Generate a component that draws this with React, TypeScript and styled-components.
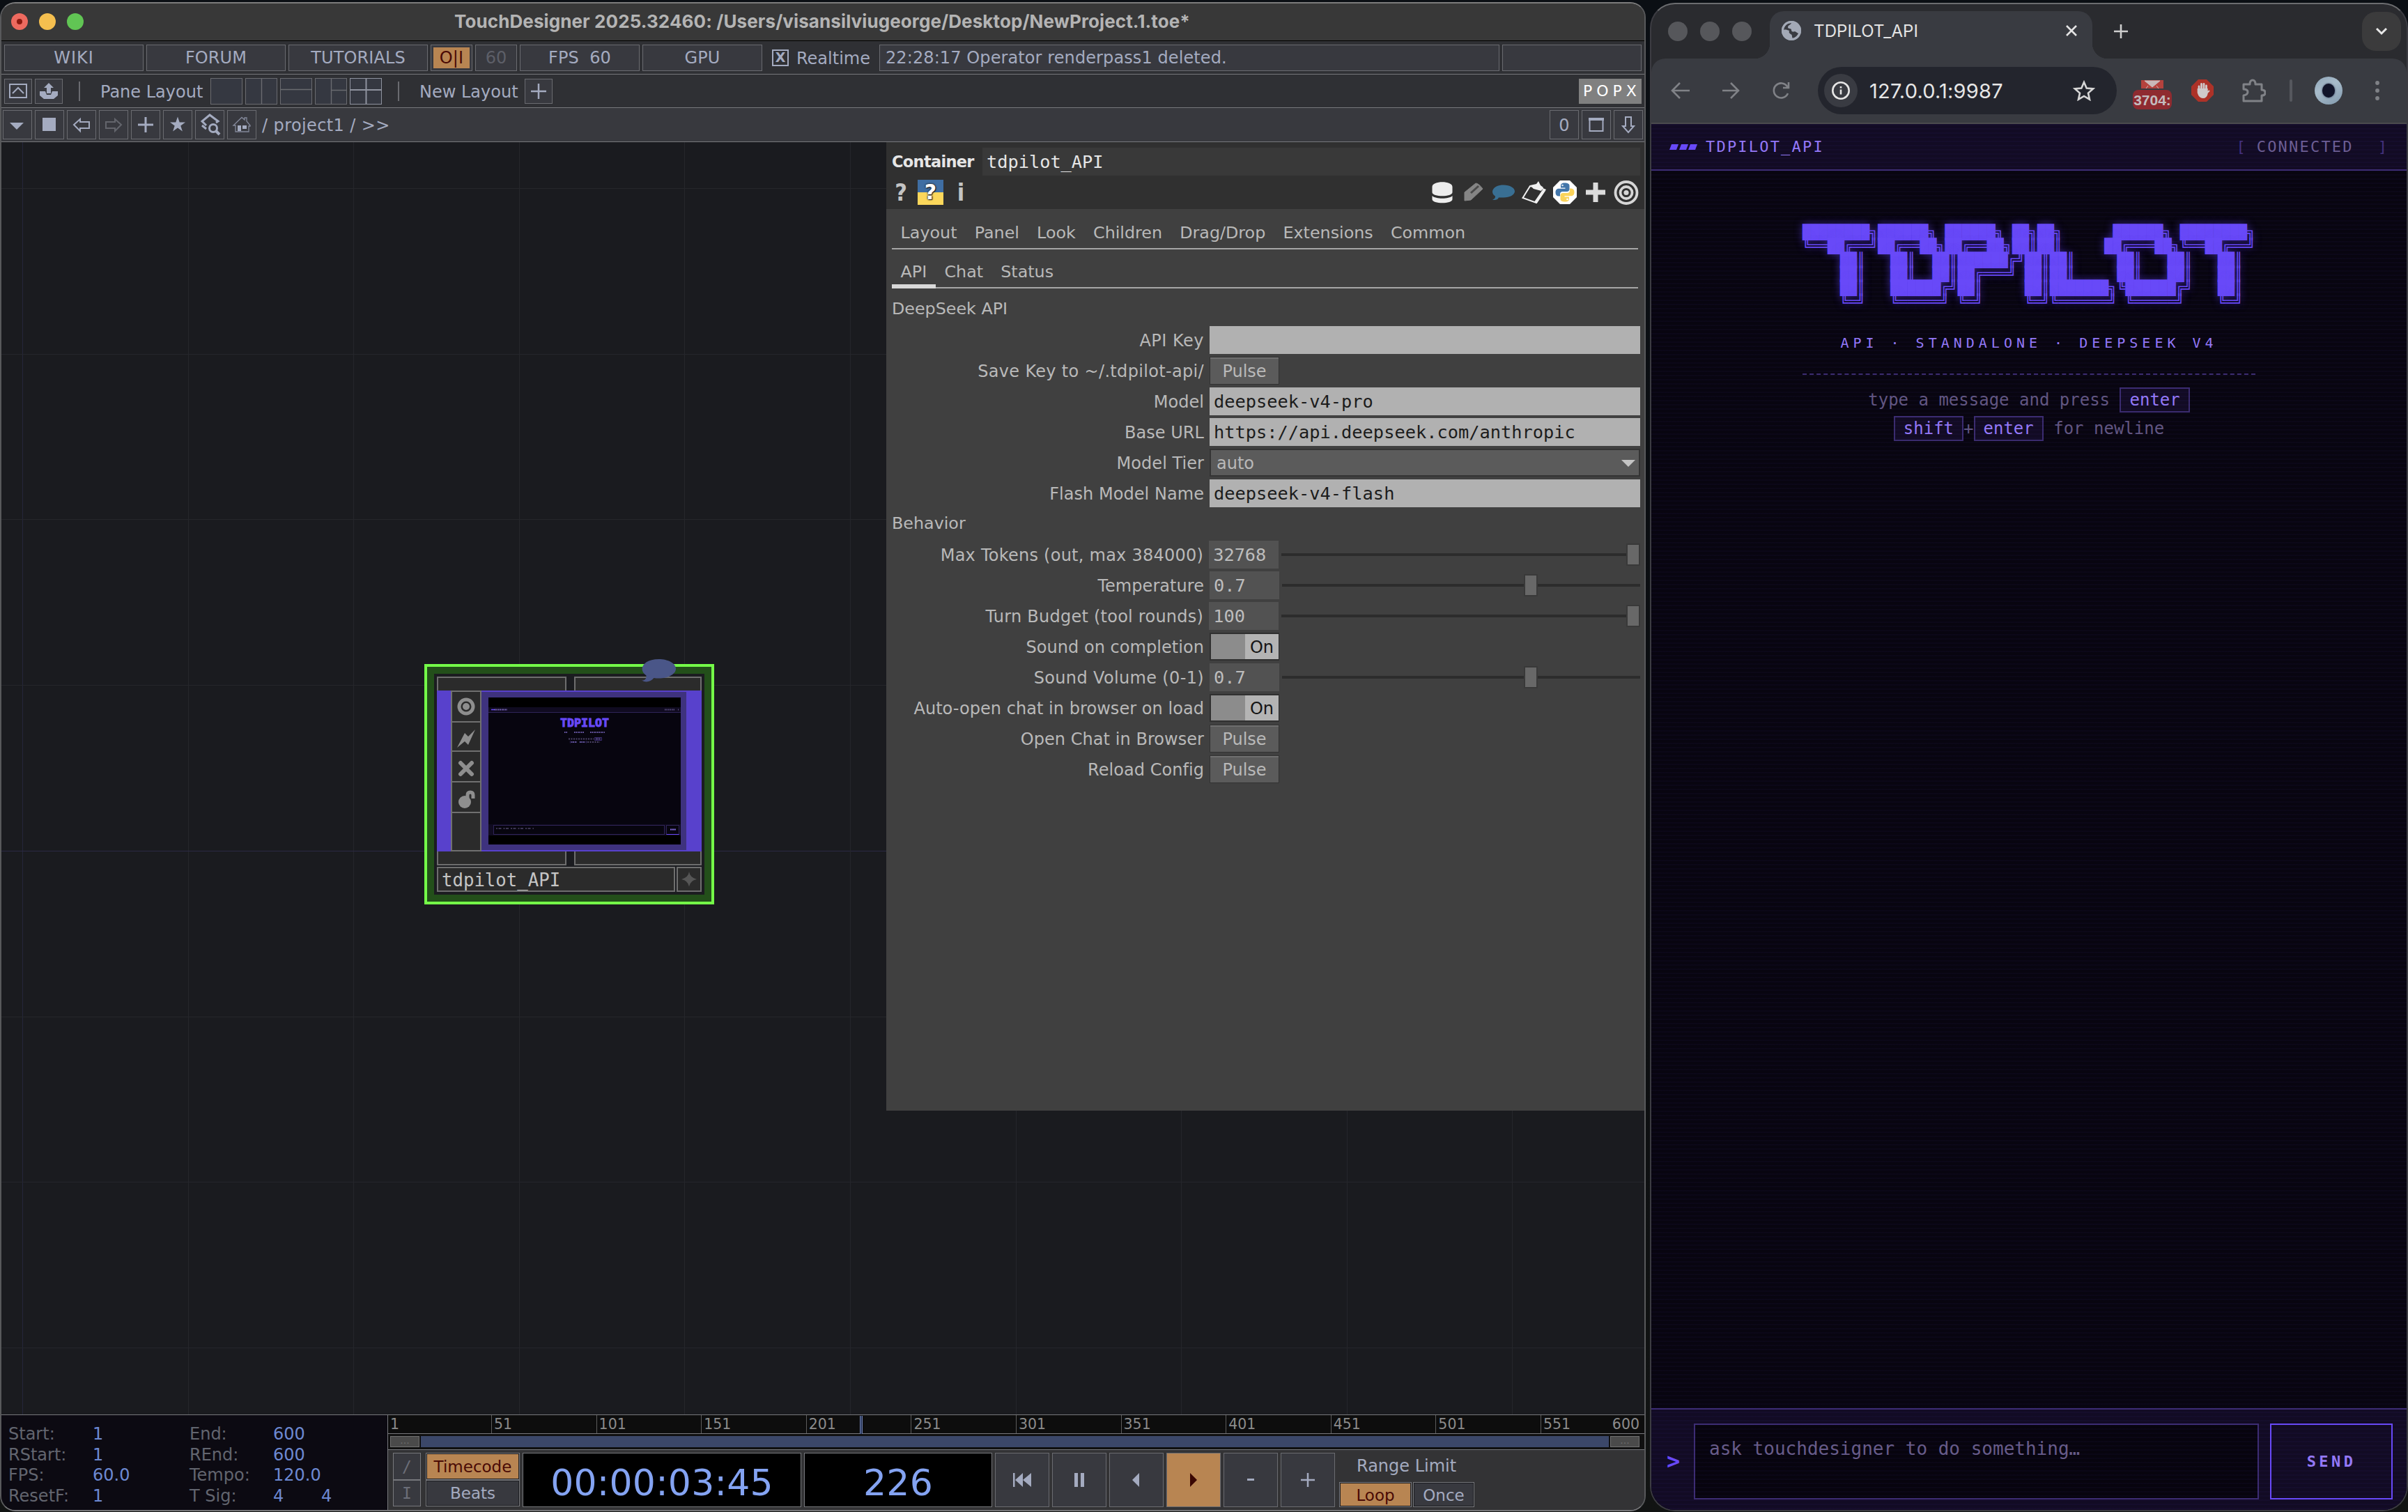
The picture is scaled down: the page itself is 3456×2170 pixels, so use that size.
import React from 'react';
import styled, { createGlobalStyle, css } from 'styled-components';

const sans = '"DejaVu Sans", Verdana, sans-serif';
const mono = '"DejaVu Sans Mono", Menlo, monospace';
const system = 'Inter, Roboto, sans-serif';

const Global = createGlobalStyle`
  *, *::before, *::after { box-sizing: border-box; }
  body { margin: 0; background: #0b0e12; }
`;

const Desktop = styled.div`
  width: 3456px;
  height: 2170px;
  overflow: hidden;
  display: flex;
  gap: 6px;
  background: linear-gradient(#0b0f14, #0b0d10 60%, #121413);
`;

/* ---------- TouchDesigner window ---------- */

const DesignerWindow = styled.section`
  width: 2362px;
  height: 2166px;
  margin-top: 3px;
  display: flex;
  flex-direction: column;
  overflow: hidden;
  border: 2px solid #58595b;
  border-top-color: #7c7c7c;
  border-bottom-color: #77777a;
  border-radius: 22px;
  background: #2f3034;
  color: #a4abc0;
  font: 24px/1 ${sans};
`;

const TitleBar = styled.header`
  height: 54px;
  flex: none;
  display: flex;
  align-items: center;
  padding: 0 0 2px 14px;
  border-bottom: 1px solid #000;
  background: #383838;
`;

const Lights = styled.div<{ $gap: number }>`
  display: flex;
  gap: ${p => p.$gap}px;
`;

const Light = styled.i<{ $color: string; $size: number }>`
  width: ${p => p.$size}px;
  height: ${p => p.$size}px;
  border-radius: 50%;
  background: ${p => p.$color};
  display: grid;
  place-items: center;
`;

const UnsavedDot = styled.i`
  width: 8px;
  height: 8px;
  border-radius: 50%;
  background: #8c1a10;
`;

const WindowTitle = styled.h1`
  margin: 0 0 0 532px;
  color: #b4b4b4;
  font: 700 26px/1 ${system};
  letter-spacing: 0.1px;
  white-space: nowrap;
`;

const Bar = styled.div<{ $height: number; $bg?: string; $pad: string }>`
  height: ${p => p.$height}px;
  flex: none;
  display: flex;
  align-items: center;
  gap: 4px;
  padding: ${p => p.$pad};
  border-bottom: 1px solid #77787c;
  background: ${p => p.$bg ?? '#2f3034'};
  white-space: nowrap;
`;

const Cell = styled.div<{ $w: number; $h?: number; $left?: boolean; $dim?: boolean; $space?: number }>`
  width: ${p => p.$w}px;
  height: ${p => p.$h ?? 38}px;
  flex: none;
  display: flex;
  align-items: center;
  justify-content: ${p => (p.$left ? 'flex-start' : 'center')};
  padding: ${p => (p.$left ? '1px 8px 0' : '1px 0 0')};
  border: 1px solid #6a6b70;
  background: #38393f;
  color: ${p => (p.$dim ? '#5d5f68' : '#a4abc0')};
  letter-spacing: ${p => p.$space ?? 0.1}px;
  white-space: pre;
  > svg { flex: none; margin: -2px -1px -1px; }
`;

const ActiveFill = styled.span`
  width: 52px;
  height: 30px;
  margin-top: -1px;
  padding-top: 1px;
  display: grid;
  place-items: center;
  background: #b88552;
  color: #4a0a05;
`;

const CheckBox = styled.span`
  width: 24px;
  height: 24px;
  margin-left: 10px;
  display: grid;
  place-items: center;
  border: 2px solid #a4abc0;
  font-weight: 700;
  font-size: 19px;
`;

const BarText = styled.span<{ $w: number; $ml: number; $space?: number }>`
  width: ${p => p.$w}px;
  margin-left: ${p => p.$ml}px;
  padding-top: 2px;
  letter-spacing: ${p => p.$space ?? 0}px;
`;

const Rule = styled.i<{ $ml: number }>`
  width: 2px;
  height: 28px;
  margin-left: ${p => p.$ml}px;
  background: #6a6b70;
`;

const PopxBadge = styled.span`
  width: 90px;
  height: 36px;
  margin-left: auto;
  padding-left: 6px;
  display: grid;
  place-items: center start;
  background: #808080;
  color: #fff;
  font-size: 22px;
  letter-spacing: 6px;
`;

const PathText = styled.span`
  margin-left: 4px;
  padding-top: 1px;
  letter-spacing: 0.4px;
  white-space: pre;
`;

const Push = styled.span`
  margin-left: auto;
`;

const Network = styled.div`
  flex: 1;
  position: relative;
  display: flex;
  align-items: flex-start;
  justify-content: flex-end;
  background: #1a1b1f;
`;

const Grid = styled.svg`
  position: absolute;
  inset: 0;
`;

/* ---------- Operator node on the network canvas ---------- */

const Node = styled.div`
  position: absolute;
  left: 607px;
  top: 749px;
  width: 416px;
  height: 345px;
  border: 4px solid #74fc48;
  background: #1b1c20;
  box-shadow: inset 0 0 0 10px #234f1a;
  padding: 14px;
  display: flex;
  flex-direction: column;
`;

const Flags = styled.div<{ $top?: boolean }>`
  height: 20px;
  display: flex;
  gap: 11px;
  > i {
    flex: 1 1 186px;
    border: 2px solid #6e6e6e;
    border-${p => (p.$top ? 'bottom' : 'top')}: 0;
    background: #2b2b2b;
  }
  > i + i { flex-basis: 183px; }
`;

const NodeMiddle = styled.div`
  height: 231px;
  display: flex;
  padding: 0 22px 0 20px;
  background: #5841cc;
`;

const NodeTools = styled.div`
  width: 44px;
  display: grid;
  grid-template-rows: 42px 40px 42px 42px 1fr;
  gap: 2px;
  padding: 2px;
  background: #707070;
  > i {
    display: grid;
    place-items: center;
    background: #2b2b2b;
  }
  > i + i { padding-top: 5px; }
`;

const NodeViewer = styled.div`
  flex: 1;
  margin: 2px 0;
  padding: 8px 8px 8px 10px;
  background: #3e327e;
`;

const MiniScreen = styled.div`
  width: 276px;
  height: 211px;
  display: flex;
  flex-direction: column;
  padding: 14px 0 13px;
  background: #000;
`;

const MiniHeader = styled.div`
  height: 8px;
  flex: none;
  border-bottom: 1px solid #2e2458;
  background: #100b20;
`;

const MiniBody = styled.div`
  flex: 1;
  display: flex;
  flex-direction: column;
  align-items: center;
  padding-top: 7px;
  background: #07050f;
`;

const MiniLogo = styled.b`
  color: #6849f8;
  font: 700 16.6px/16px ${mono};
  -webkit-text-stroke: 1px #6849f8;
`;

const MiniFooter = styled.div`
  height: 16px;
  flex: none;
  display: flex;
  gap: 2px;
  padding: 1px 2px 1px 7px;
  background: #100b20;
`;

const MiniField = styled.i<{ $w: number; $c: string }>`
  width: ${p => p.$w}px;
  border: 1px solid #2f2458;
  border-bottom-color: ${p => p.$c};
  background: #07050f;
`;

const NodeName = styled.div`
  height: 36px;
  margin-top: 2px;
  display: flex;
  gap: 2px;
  > div {
    border: 2px solid #6e6e6e;
    background: #2b2b2b;
    display: flex;
    align-items: center;
    justify-content: center;
    width: 36px;
  }
  > div:first-child {
    flex: 1;
    justify-content: flex-start;
    padding: 3px 0 0 5px;
    color: #c4c4c4;
    font: 25.7px/1 ${mono};
  }
`;

const NodeComment = styled.svg`
  position: absolute;
  right: 51px;
  top: -12px;
`;

/* ---------- Parameter panel ---------- */

const Panel = styled.aside`
  position: relative;
  width: 1088px;
  height: 1390px;
  background: #404040;
  color: #b9b9b9;
`;

const PanelHead = styled.div`
  height: 96px;
  padding: 8px 6px 0 8px;
  background: #303030;
`;

const NameRow = styled.div`
  height: 40px;
  display: flex;
  align-items: center;
  color: #e6e6e6;
  b {
    width: 130px;
    padding-top: 1px;
    font-size: 22.5px;
    letter-spacing: -0.7px;
  }
`;

const NameField = styled.div`
  flex: 1;
  height: 40px;
  display: flex;
  align-items: center;
  padding: 2px 0 0 6px;
  background: #393939;
  font: 25.3px/1 ${mono};
`;

const IconRow = styled.div`
  height: 48px;
  display: flex;
  align-items: center;
`;

const Glyph = styled.b`
  width: 26px;
  text-align: center;
  color: #c4c4c4;
  font: 700 34px/1 "DejaVu Sans Condensed", ${sans};
`;

const PyHelp = styled.b`
  width: 37px;
  height: 36px;
  margin: 0 12px 0 11px;
  display: grid;
  place-items: center;
  background: linear-gradient(#3f6ea3 50%, #fbd75b 50%);
  color: #fff;
  font: 700 30px/1 ${sans};
  text-shadow: 0 0 2px #222, 0 0 3px #222, 1px 1px 1px #222;
`;

const Tabs = styled.div<{ $h: number }>`
  height: ${p => p.$h}px;
  margin: 0 9px 0 8px;
  display: flex;
  border-bottom: 2px solid #a6a6a6;
`;

const Tab = styled.span<{ $active?: boolean; $pt: number }>`
  height: calc(100% + 2px);
  padding: ${p => p.$pt}px 12.6px 0;
  font-size: 23.8px;
  ${p => p.$active && css`border-bottom: 6px solid #d8d8d8;`}
`;

const Section = styled.div<{ $mt?: number }>`
  height: 44px;
  margin-top: ${p => p.$mt ?? 0}px;
  display: flex;
  align-items: center;
  padding-left: 8px;
  font-size: 23.8px;
`;

const Param = styled.div`
  height: 44px;
  display: flex;
  align-items: center;
  padding-right: 6px;
`;

const ParamLabel = styled.label<{ $space?: number }>`
  width: 464px;
  padding: 2px 8px 0 0;
  text-align: right;
  letter-spacing: ${p => p.$space ?? 0.05}px;
  white-space: nowrap;
`;

const TextField = styled.div`
  flex: 1;
  height: 40px;
  display: flex;
  align-items: center;
  padding: 1px 0 0 6px;
  background: #b1b1b1;
  color: #1c1c1c;
  font: 25.35px/1 ${mono};
`;

const Select = styled.div`
  flex: 1;
  height: 40px;
  display: flex;
  align-items: center;
  justify-content: space-between;
  padding: 1px 5px 0 8px;
  border: 2px solid #343434;
  background: #5b5b5b;
`;

const PulseButton = styled.div`
  width: 100px;
  height: 40px;
  padding-top: 1px;
  display: grid;
  place-items: center;
  border: 1px solid #323232;
  box-shadow: inset 0 2px #6f6f6f;
  background: #5b5b5b;
`;

const NumberField = styled.div`
  width: 100px;
  height: 40px;
  display: flex;
  align-items: center;
  padding: 1px 0 0 6px;
  background: #525252;
  color: #bdbdbd;
  font: 25.3px/1 ${mono};
`;

const Slider = styled.div`
  flex: 1;
  height: 32px;
  margin-left: 4px;
  display: flex;
  align-items: center;
  background: linear-gradient(#2c2c2c, #2c2c2c) center / 100% 4px no-repeat;
`;

const Thumb = styled.i`
  width: 20px;
  height: 32px;
  flex: none;
  border: 2px solid #393939;
  background: #686868;
`;

const Toggle = styled.div`
  width: 100px;
  height: 40px;
  display: flex;
  align-items: center;
  justify-content: flex-end;
  padding: 1px 7px 0 0;
  border: 2px solid #303030;
  border-right-width: 1px;
  background: linear-gradient(90deg, #8c8c8c 50%, #b4b4b4 50%);
  color: #161616;
`;

/* ---------- Timeline ---------- */

const Timeline = styled.footer`
  height: 137px;
  flex: none;
  display: flex;
  border-top: 1px solid #77787c;
  background: #333335;
`;

const Info = styled.dl`
  width: 555px;
  margin: 0;
  padding: 12px 0 5px 10px;
  display: grid;
  grid-template-columns: 121px 139px 120px 69px 1fr;
  align-items: center;
  border-right: 1px solid #77787c;
  background: #0c0a12;
  white-space: nowrap;
`;

const InfoLabel = styled.dt`
  color: #62656f;
`;

const InfoValue = styled.dd`
  margin: 0;
  color: #6d89d2;
`;

const Transport = styled.div`
  flex: 1;
  display: flex;
  flex-direction: column;
`;

const Ruler = styled.div`
  height: 28px;
  position: relative;
  display: flex;
  border-bottom: 1px solid #77787c;
  background: #0d0d0d;
  color: #8b8b8b;
  font-size: 20.5px;
`;

const Tick = styled.span<{ $w?: number; $first?: boolean; $last?: boolean }>`
  ${p => (p.$last ? 'margin-left: auto; padding-right: 7px;' : `width: ${p.$w ?? 150.6}px;`)}
  padding-top: 3px;
  padding-left: 3px;
  border-left: ${p => (p.$first || p.$last ? '0' : '1px solid #5c5c5c')};
`;

const Playhead = styled.i`
  position: absolute;
  left: 677px;
  top: 1px;
  width: 4px;
  height: 26px;
  border-left: 1px solid #6f7fae;
  border-right: 1px solid #6f7fae;
  background: #2c3a5e;
`;

const RangeBar = styled.div`
  height: 23px;
  display: flex;
  gap: 2px;
  padding: 3px 7px 3px 3px;
  border-bottom: 1px solid #77787c;
  background: #101010;
  > i { flex: 1; background: #3b4769; }
`;

const RangeHandle = styled.span`
  width: 42px;
  border: 1px solid #707070;
  background: #4a4a4a;
  color: #6e6e6e;
  font-size: 14px;
  line-height: 10px;
  text-align: center;
`;

const Controls = styled.div`
  flex: 1;
  display: flex;
  gap: 4px;
  padding: 4px 0 4px 7px;
`;

const Stack = styled.div<{ $w: number; $mr?: number }>`
  width: ${p => p.$w}px;
  height: 77px;
  margin-right: ${p => p.$mr ?? 0}px;
  display: grid;
  grid-template-rows: 1fr 1fr;
  > * + * { border-top: 0; }
`;

const ModeButton = styled.div<{ $on?: boolean }>`
  padding-top: 2px;
  display: grid;
  place-items: center;
  border: 1px solid #77787c;
  box-shadow: inset 0 0 0 1px #1b1c20;
  background: ${p => (p.$on ? '#b88552' : '#38393f')};
  color: ${p => (p.$on ? '#4a0a05' : '#a4abc0')};
  font-size: 23px;
`;

const SlimButton = styled(ModeButton)`
  box-shadow: none;
  color: #6c6e78;
  font-family: ${mono};
`;

const Readout = styled.div<{ $w: number }>`
  width: ${p => p.$w}px;
  height: 78px;
  display: grid;
  place-items: center;
  padding-top: 8px;
  border: 1px solid #77787c;
  background: #000;
  color: #84a3f2;
  font-size: 52px;
  letter-spacing: 0.2px;
`;

const TransportButton = styled.div<{ $on?: boolean }>`
  width: 78px;
  height: 78px;
  display: grid;
  place-items: center;
  border: 1px solid #6a6b70;
  background: ${p => (p.$on ? '#b88552' : '#38393f')};
  color: ${p => (p.$on ? '#3a0703' : '#a4abc0')};
`;

const RangeLimit = styled.div`
  display: flex;
  flex-direction: column;
  padding-left: 2px;
  > span { padding: 7px 0 0 25px; height: 42px; }
  > div { display: flex; gap: 2px; height: 36px; }
  > div > :first-child { width: 104px; }
  > div > :last-child { width: 88px; }
`;

/* ---------- Browser window ---------- */

const BrowserWindow = styled.section`
  width: 1088px;
  height: 2165px;
  margin-top: 4px;
  display: flex;
  flex-direction: column;
  overflow: hidden;
  border: 2px solid #3c3c42;
  border-top-color: #6c6d70;
  border-radius: 36px;
  background: #2a2b2f;
  font-family: ${system};
`;

const TabStrip = styled.div`
  height: 78px;
  flex: none;
  display: flex;
  align-items: center;
  padding: 0 8px 0 24px;
`;

const BrowserTab = styled.div`
  width: 463px;
  height: 68px;
  margin: 0 0 0 26px;
  align-self: flex-end;
  position: relative;
  display: flex;
  align-items: center;
  padding: 0 21px 12px 17px;
  border-radius: 20px 20px 0 0;
  background: #393b41;
  color: #e4e4e4;
  font-size: 24px;
  span { margin-left: 18px; flex: 1; letter-spacing: 0.15px; }
  &::before, &::after {
    content: '';
    position: absolute;
    bottom: 0;
    width: 22px;
    height: 22px;
    background: radial-gradient(circle at 0 0, transparent 22px, #393b41 22.5px);
  }
  &::before { left: -22px; }
  &::after { right: -22px; transform: scaleX(-1); }
`;

const TabMenu = styled.div`
  width: 56px;
  height: 56px;
  margin-left: auto;
  display: grid;
  place-items: center;
  border-radius: 20px;
  background: #3b3b3c;
`;

const NavBar = styled.div`
  height: 94px;
  flex: none;
  display: flex;
  align-items: center;
  padding: 0 22px 0 26px;
  border-bottom: 2px solid #4b4a4d;
  border-radius: 20px 20px 0 0;
  background: #393b41;
  color: #808287;
`;

const NavIcon = styled.svg<{ $mr: number }>`
  flex: none;
  margin-right: ${p => p.$mr}px;
`;

const AddressBar = styled.div`
  width: 429px;
  height: 68px;
  margin-right: 23px;
  display: flex;
  align-items: center;
  padding: 0 31px 0 9px;
  border-radius: 34px;
  background: #23252d;
  color: #e6e6e6;
  font-size: 29px;
  > span { flex: 1; margin-left: 17px; letter-spacing: 0.2px; }
`;

const SiteInfo = styled.i`
  width: 48px;
  height: 48px;
  display: grid;
  place-items: center;
  border-radius: 50%;
  background: #393b42;
`;

const MailExtension = styled.div`
  width: 56px;
  height: 42px;
  margin: 12px 28px 0 0;
  display: flex;
  flex-direction: column;
  align-items: center;
`;

const MailCount = styled.span`
  width: 56px;
  height: 28px;
  flex: none;
  display: grid;
  place-items: center;
  border-radius: 8px;
  background: #8f2b30;
  color: #c3bcbe;
  font: 700 21px/1 "Liberation Sans", ${system};
`;

const NavDivider = styled.i`
  width: 4px;
  height: 32px;
  margin-right: 32px;
  border-radius: 2px;
  background: #56585e;
`;

const Avatar = styled.i`
  width: 40px;
  height: 40px;
  margin-right: 47px;
  display: grid;
  place-items: center;
  border-radius: 50%;
  background: linear-gradient(150deg, #8fa5b8, #a8bccb 40%, #8199ad);
  &::after {
    content: '';
    width: 18px;
    height: 20px;
    border-radius: 50%;
    background: #11142a;
    box-shadow: 0 0 3px #2a3350;
  }
`;

const Page = styled.main`
  flex: 1;
  display: flex;
  flex-direction: column;
  background: #080510;
  font-family: ${mono};
  position: relative;
  &::after {
    content: '';
    position: absolute;
    inset: 0;
    pointer-events: none;
    background: repeating-linear-gradient(rgba(104, 73, 248, 0.035) 0 2px, transparent 2px 6px);
  }
`;

const PageHeader = styled.div`
  height: 67px;
  flex: none;
  display: flex;
  align-items: center;
  padding: 0 28px 0 26px;
  border-bottom: 2px solid #3c2c72;
  background: #120b24;
  font-size: 22px;
  line-height: 1;
`;

const Brand = styled.span`
  margin-left: 12px;
  flex: 1;
  color: #9479f8;
  letter-spacing: 2.2px;
`;

const Connection = styled.span`
  display: flex;
  color: #43317c;
  b {
    margin: 0 35px 0 16px;
    color: #6c5e93;
    font-weight: 400;
    letter-spacing: 2.2px;
  }
`;

const Hero = styled.div`
  width: 650.4px;
  margin: 78px auto 0;
  flex: 1;
  text-align: center;
`;

const LogoLine = styled.div`
  height: 20px;
  color: #6849f8;
  font: 20px/20px ${mono};
  white-space: pre;
  text-shadow: 0 0 12px rgba(104, 73, 248, 0.5);
`;

const Tagline = styled.div`
  margin-top: 36px;
  color: #9479f8;
  font-size: 20px;
  line-height: 26px;
  letter-spacing: 6px;
  white-space: pre;
`;

const Dashes = styled.hr`
  margin: 31px 0 16px;
  border: 0;
  border-top: 2px dashed #3c2c72;
`;

const Hint = styled.p`
  margin: 0;
  color: #615680;
  font-size: 24px;
  line-height: 41px;
  white-space: pre;
`;

const Key = styled.kbd`
  padding: 2px 12px;
  border: 2px solid #3a2b6e;
  background: #120b24;
  color: #9479f8;
  font: 24px/1 ${mono};
`;

const Composer = styled.div`
  height: 146px;
  flex: none;
  display: flex;
  align-items: flex-start;
  padding: 20px 20px 0 22px;
  border-top: 2px solid #3c2c72;
  background: #120b24;
`;

const Prompt = styled.b`
  width: 39px;
  color: #6849f8;
  font-size: 32px;
  line-height: 108px;
`;

const Input = styled.div`
  flex: 1;
  height: 109px;
  padding: 19px 20px;
  border: 2px solid #3c2c72;
  background: #07040e;
  color: #675c88;
  font-size: 26px;
  line-height: 30px;
`;

const Send = styled.div`
  width: 176px;
  height: 109px;
  margin-left: 16px;
  display: grid;
  place-items: center;
  border: 2px solid #6849f8;
  color: #9479f8;
  font-size: 22px;
  font-weight: 700;
  letter-spacing: 4.4px;
`;

/* ---------- Icons ---------- */

const line = { fill: 'none', stroke: 'currentColor', strokeWidth: 2 };

const PaneIcon = ({ lines, bright }: { lines: string; bright?: boolean }) => (
  <svg width="46" height="38">
    <rect x=".5" y=".5" width="45" height="37" fill="#353841" stroke={bright ? '#8f939f' : '#6a6b70'} />
    <path d={lines} stroke={bright ? '#8f939f' : '#6a6b70'} strokeWidth={bright ? 2 : 1.4} />
  </svg>
);

const navIcons: React.ReactNode[] = [
  <svg width="42" height="42"><path d="M10 18h20l-10 10z" fill="currentColor" /></svg>,
  <svg width="42" height="42"><path d="M11 11h19v19H11z" fill="currentColor" /></svg>,
  <svg width="42" height="42"><path d="M10 21l9-8v4h13v9H19v4z" {...line} /></svg>,
  <svg width="42" height="42" color="#63656c"><path d="M32 21l-9-8v4H10v9h13v4z" {...line} /></svg>,
  <svg width="42" height="42"><path d="M21 10v22M10 21h22" {...line} strokeWidth={3} /></svg>,
  <svg width="42" height="42"><path d="M21 9.500l2.700 8H32l-6.700 4.900 2.600 8L21 25.500l-6.900 4.900 2.600-8L10 17.500h8.300z" fill="currentColor" /></svg>,
  <svg width="42" height="42"><path d="M12 18l-2-2 11-9 12 9-3 2M10 22l6 5M12 18l4 4" {...line} strokeWidth={3} /><circle cx="26" cy="26" r="5.500" {...line} strokeWidth={3} /><path d="M30 30l5 5" {...line} strokeWidth={4} /></svg>,
  <svg width="42" height="42"><path d="M9 22L21 10.500 25 14v-3h3v5l5 6v1h-2v8H12v-9z" {...line} strokeWidth={1.300} stroke="#83889a" /><path d="M15 22h5v8h-5zM22 22h6v5h-6z" fill="currentColor" /></svg>,
];

const pane: [string, boolean?][] = [
  [''],
  ['M23.500 0V38'],
  ['M0 16.500H46'],
  ['M23.500 0V38M23.500 17.500H46'],
  ['M23.500 0V38M0 17H46', true],
];

const snake = 'M17 3.500c-5 0-6 2-6 4v3h6.500v1.200H8c-3 0-4.500 2.300-4.500 5.500S5 22.500 8 22.500h2v-3c0-2 1.500-3.500 3.500-3.500h6.500c2 0 3.500-1.500 3.500-3.500V7.500c0-3-3-4-6.500-4z';

const Python = () => (
  <svg width="34" height="34" viewBox="0 0 34 34">
    <path d="M10 0h14l10 10v14L24 34H10L0 24V10z" fill="#fff" />
    <path d={snake} fill="#4376aa" />
    <path transform="rotate(180 17 17)" d={snake} fill="#fbd35a" />
    <circle cx="13.500" cy="7" r="1.300" fill="#dfe8f2" />
    <circle cx="20.500" cy="27" r="1.300" fill="#fff" />
  </svg>
);

const PanelIconStrip = styled.svg`
  margin-left: auto;
`;

const PanelIcons = () => (
  <PanelIconStrip width="300" height="40" viewBox="2054 256 300 40">
    <path d="M2055.500 268c0-9 29-9 29 0v8c0 7-29 7-29 0zM2055.500 281c5 5 24 5 29 0v5c0 7-29 7-29 0z" fill="#ededed" />
    <path d="M2102 276l16-13q4 0 10 8l-17 16-9 1zM2110 277l10-9" fill="#858585" stroke="#858585" />
    <path d="M2111 277l11-10" stroke="#4a4a4a" strokeWidth="3" />
    <path d="M2158 265.500c9 0 16 4 16 9s-7 9-16 9h-7c-2 4-6 4-9 3 3-1 4-2 4-5-8-5-4-16 12-16z" fill="#396f93" />
    <path d="M2196 267l-10.500 17 19.500 7 12.500-18.500-7-3z" fill="none" stroke="#f0f0f0" strokeWidth="2" />
    <path d="M2196 266l9-2 3-4 3 6 4 3-3 5-11-3z" fill="#f0f0f0" />
    <path d="M2216 273l-12 17.500" stroke="#f0f0f0" strokeWidth="4" />
    <g transform="translate(2229 259)"><Python /></g>
    <path d="M2290 262v28M2276 276h28" stroke="#dcdcdc" strokeWidth="7" />
    <g fill="none" stroke="#d6d6d6" strokeWidth="3.800">
      <circle cx="2334" cy="276.500" r="15.500" />
      <circle cx="2334" cy="276.500" r="8.500" />
    </g>
    <circle cx="2334" cy="276.500" r="3.600" fill="#d6d6d6" />
  </PanelIconStrip>
);

const gridSteps = [0, 1, 2, 3, 4, 5, 6, 7, 8, 9];

/* ---------- Data ---------- */

type ParamSpec = {
  label: string;
  kind: 'text' | 'pulse' | 'menu' | 'number' | 'toggle';
  value?: string;
  at?: number;
  space?: number;
};

const apiParams: ParamSpec[] = [
  { label: 'API Key', kind: 'text', value: '', space: 0.5 },
  { label: 'Save Key to ~/.tdpilot-api/', kind: 'pulse', space: 0.33 },
  { label: 'Model', kind: 'text', value: 'deepseek-v4-pro' },
  { label: 'Base URL', kind: 'text', value: 'https://api.deepseek.com/anthropic' },
  { label: 'Model Tier', kind: 'menu', value: 'auto' },
  { label: 'Flash Model Name', kind: 'text', value: 'deepseek-v4-flash' },
];

const behaviorParams: ParamSpec[] = [
  { label: 'Max Tokens (out, max 384000)', kind: 'number', value: '32768', at: 1, space: 0.25 },
  { label: 'Temperature', kind: 'number', value: '0.7', at: 0.7 },
  { label: 'Turn Budget (tool rounds)', kind: 'number', value: '100', at: 1, space: 0.25 },
  { label: 'Sound on completion', kind: 'toggle' },
  { label: 'Sound Volume (0-1)', kind: 'number', value: '0.7', at: 0.7, space: 0.35 },
  { label: 'Auto-open chat in browser on load', kind: 'toggle' },
  { label: 'Open Chat in Browser', kind: 'pulse' },
  { label: 'Reload Config', kind: 'pulse' },
];

const ParamRow = ({ label, kind, value, at = 0, space }: ParamSpec) => (
  <Param>
    <ParamLabel $space={space}>{label}</ParamLabel>
    {kind === 'text' && <TextField>{value}</TextField>}
    {kind === 'pulse' && <PulseButton>Pulse</PulseButton>}
    {kind === 'menu' && (
      <Select>
        {value}
        <svg width="20" height="10"><path d="M0 0h20L10 10z" fill="#c4c4c4" /></svg>
      </Select>
    )}
    {kind === 'number' && (
      <>
        <NumberField>{value}</NumberField>
        <Slider><Thumb style={{ marginLeft: at * 495 }} /></Slider>
      </>
    )}
    {kind === 'toggle' && <Toggle>On</Toggle>}
  </Param>
);

const info: string[][] = [
  ['Start:', '1', 'End:', '600', ''],
  ['RStart:', '1', 'REnd:', '600', ''],
  ['FPS:', '60.0', 'Tempo:', '120.0', ''],
  ['ResetF:', '1', 'T Sig:', '4', '4'],
];

const logo = [
  '████████╗██████╗ ██████╗ ██╗██╗      ██████╗ ████████╗',
  '╚══██╔══╝██╔══██╗██╔══██╗██║██║     ██╔═══██╗╚══██╔══╝',
  '   ██║   ██║  ██║██████╔╝██║██║     ██║   ██║   ██║',
  '   ██║   ██║  ██║██╔═══╝ ██║██║     ██║   ██║   ██║',
  '   ██║   ██████╔╝██║     ██║███████╗╚██████╔╝   ██║',
  '   ╚═╝   ╚═════╝ ╚═╝     ╚═╝╚══════╝ ╚═════╝    ╚═╝',
];

/* ---------- Windows ---------- */

const OperatorNode = () => (
  <Node>
    <Flags $top><i /><i /></Flags>
    <NodeMiddle>
      <NodeTools>
        <i><svg width="26" height="26"><circle cx="13" cy="13" r="10" fill="none" stroke="#8e8e8e" strokeWidth="5" /><circle cx="13" cy="13" r="5" fill="#8e8e8e" /></svg></i>
        <i><svg width="28" height="28"><path d="M1 27L12 6l5 5L27 1 17 23l-5-5z" fill="#8e8e8e" /></svg></i>
        <i><svg width="24" height="24"><path d="M4 4l16 16M20 4L4 20" stroke="#8e8e8e" strokeWidth="6" strokeLinecap="round" /></svg></i>
        <i><svg width="26" height="28"><circle cx="11" cy="18" r="9" fill="#8e8e8e" /><path d="M15 12V8q0-4 4-4t4 4v5" fill="none" stroke="#8e8e8e" strokeWidth="5" /></svg></i>
        <i />
      </NodeTools>
      <NodeViewer>
        <MiniScreen>
          <MiniHeader>
            <svg width="276" height="7" display="block">
              <path d="M4 3.500h5" stroke="#6849f8" strokeWidth="1.500" />
              <path d="M9 3.500h18" stroke="#8a76d0" strokeWidth="1.800" strokeDasharray="1.500 1" />
              <path d="M253 3.500h15M272 3.500h1" stroke="#5c5080" strokeWidth="1.800" strokeDasharray="1.500 1" />
            </svg>
          </MiniHeader>
          <MiniBody>
            <MiniLogo>TDPILOT</MiniLogo>
            <svg width="80" height="26">
              <g fill="none" strokeWidth="2">
                <path d="M11 5h4M25 5h15M48 5h21" stroke="#6f5fb0" strokeDasharray="1.500 1" />
                <path d="M17 14.500h36M44 19h18" stroke="#4d4468" strokeDasharray="2 1.500" />
                <path d="M56 14.500h7M21 19h8M33 19h8" stroke="#7a68c4" strokeDasharray="1.500 1" />
              </g>
              <path d="M54.500 12.500h10v4h-10zM19.500 17.500v3M42.500 17.500v3" fill="none" stroke="#3c2c72" />
            </svg>
          </MiniBody>
          <MiniFooter>
            <MiniField $w={246} $c="#2f2458">
              <svg width="60" height="8" display="block"><path d="M3 4h54" stroke="#4d4468" strokeWidth="1.600" strokeDasharray="2 1.500 4 3" /></svg>
            </MiniField>
            <MiniField $w={19} $c="#6849f8">
              <svg width="17" height="12" display="block"><path d="M5 5.500h8" stroke="#9479f8" strokeWidth="2" strokeDasharray="1.500 .6" /></svg>
            </MiniField>
          </MiniFooter>
        </MiniScreen>
      </NodeViewer>
    </NodeMiddle>
    <Flags><i /><i /></Flags>
    <NodeName>
      <div>tdpilot_API</div>
      <div><svg width="22" height="22"><path d="M11 0q1 8 11 11-10 2-11 11Q10 13 0 11 10 8 11 0z" fill="#565656" /></svg></div>
    </NodeName>
    <NodeComment width="50" height="34">
      <path d="M25.500 1C39 1 50 7 50 14.700S39 28.500 25.500 28.500q-4 0-7-.6C14 33.500 7 35 1 31.500c5 0 7-3 6.500-7C-5 16 3 1 25.500 1z" fill="#4a5688" />
    </NodeComment>
  </Node>
);

const Designer = () => (
  <DesignerWindow>
    <TitleBar>
      <Lights $gap={16}>
        <Light $size={24} $color="#ee6a5f"><UnsavedDot /></Light>
        <Light $size={24} $color="#f5bf4f" />
        <Light $size={24} $color="#61c554" />
      </Lights>
      <WindowTitle>TouchDesigner 2025.32460: /Users/visansilviugeorge/Desktop/NewProject.1.toe*</WindowTitle>
    </TitleBar>
    <Bar $height={48} $pad="0 0 0 4px">
      <Cell $w={200} $space={1}>WIKI</Cell>
      <Cell $w={200}>FORUM</Cell>
      <Cell $w={200}>TUTORIALS</Cell>
      <Cell $w={60}><ActiveFill>O|I</ActiveFill></Cell>
      <Cell $w={60} $dim>60</Cell>
      <Cell $w={172}>{'FPS  60'}</Cell>
      <Cell $w={172}>GPU</Cell>
      <CheckBox>X</CheckBox>
      <BarText $w={115} $ml={7}>Realtime</BarText>
      <Cell $w={890} $left>22:28:17 Operator renderpass1 deleted.</Cell>
      <Cell $w={200} />
    </Bar>
    <Bar $height={48} $pad="0 4px 0 4px">
      <Cell $w={40} $h={36}>
        <svg width="28" height="24"><path d="M2 2h24v19H2zM6 15l8-8 8 8" {...line} /></svg>
      </Cell>
      <Cell $w={40} $h={36}>
        <svg width="28" height="26"><path d="M14 1l7 7h-4v8h-6V8H7zM1 13h8l2 5h6l2-5h8v6l-6 5H7l-6-5z" fill="currentColor" /></svg>
      </Cell>
      <Rule $ml={19} />
      <BarText $w={154} $ml={25}>Pane Layout</BarText>
      {pane.map(([lines, bright]) => <PaneIcon key={lines} lines={lines} bright={bright} />)}
      <Rule $ml={19} />
      <BarText $w={147} $ml={25}>New Layout</BarText>
      <Cell $w={40} $h={36}>
        <svg width="22" height="22"><path d="M11 0v22M0 11h22" {...line} strokeWidth={2.500} /></svg>
      </Cell>
      <PopxBadge>POPX</PopxBadge>
    </Bar>
    <Bar $height={49} $bg="#38393e" $pad="0 2px 0 2px">
      {navIcons.map((icon, i) => <Cell key={i} $w={42} $h={42}>{icon}</Cell>)}
      <PathText>/ project1 / &gt;&gt;</PathText>
      <Push />
      <Cell $w={42} $h={42}>0</Cell>
      <Cell $w={42} $h={42}><svg width="22" height="22"><path d="M1.500 2v18h19V2z" {...line} /><path d="M0 1h22v4H0z" fill="currentColor" /></svg></Cell>
      <Cell $w={42} $h={42}><svg width="20" height="26"><path d="M6 2h8v13h4l-8 9-8-9h4z" {...line} /></svg></Cell>
    </Bar>
    <Network>
      <Grid width="2358" height="1826">
        {gridSteps.map(i => (
          <g key={i} shapeRendering="crispEdges">
            <path d={`M${Math.round(30 + i * 237.6)}.500 0V1826`} stroke={i === 0 ? '#24263a' : '#25262b'} />
            <path d={`M0 ${Math.round(66 + i * 237.7)}.500H2358`} stroke={i === 4 ? '#2b2a44' : '#25262b'} />
          </g>
        ))}
      </Grid>
      <OperatorNode />
      <Panel>
        <PanelHead>
          <NameRow>
            <b>Container</b>
            <NameField>tdpilot_API</NameField>
          </NameRow>
          <IconRow>
            <Glyph>?</Glyph>
            <PyHelp>?</PyHelp>
            <Glyph>i</Glyph>
            <PanelIcons />
          </IconRow>
        </PanelHead>
        <Tabs $h={58}>
          {['Layout', 'Panel', 'Look', 'Children', 'Drag/Drop', 'Extensions', 'Common'].map(t => <Tab key={t} $pt={23}>{t}</Tab>)}
        </Tabs>
        <Tabs $h={56}>
          <Tab $pt={21} $active>API</Tab>
          <Tab $pt={21}>Chat</Tab>
          <Tab $pt={21}>Status</Tab>
        </Tabs>
        <Section $mt={8}>DeepSeek API</Section>
        {apiParams.map(p => <ParamRow key={p.label} {...p} />)}
        <Section>Behavior</Section>
        {behaviorParams.map(p => <ParamRow key={p.label} {...p} />)}
      </Panel>
    </Network>
    <Timeline>
      <Info>
        {info.map(row => row.map((t, i) => (i === 0 || i === 2
          ? <InfoLabel key={row[0] + i}>{t}</InfoLabel>
          : <InfoValue key={row[0] + i}>{t}</InfoValue>)))}
      </Info>
      <Transport>
        <Ruler>
          <Tick $first $w={148}>1</Tick>
          {[51, 101, 151, 201, 251, 301, 351, 401, 451, 501].map(n => <Tick key={n}>{n}</Tick>)}
          <Tick $w={90}>551</Tick>
          <Tick $last>600</Tick>
          <Playhead />
        </Ruler>
        <RangeBar>
          <RangeHandle>...</RangeHandle>
          <i />
          <RangeHandle>...</RangeHandle>
        </RangeBar>
        <Controls>
          <Stack $w={40} $mr={3}>
            <SlimButton>/</SlimButton>
            <SlimButton>I</SlimButton>
          </Stack>
          <Stack $w={135}>
            <ModeButton $on>Timecode</ModeButton>
            <ModeButton>Beats</ModeButton>
          </Stack>
          <Readout $w={400}>00:00:03:45</Readout>
          <Readout $w={270}>226</Readout>
          <TransportButton><svg width="26" height="20"><path d="M0 0h2.500v20H0zM14 0v20L3 10zM26 0v20L14 10z" fill="currentColor" /></svg></TransportButton>
          <TransportButton><svg width="14" height="20"><path d="M0 0h5v20H0zM9 0h5v20H9z" fill="currentColor" /></svg></TransportButton>
          <TransportButton><svg width="14" height="20"><path d="M11 0v20L1 10z" fill="currentColor" /></svg></TransportButton>
          <TransportButton $on><svg width="12" height="20"><path d="M1 0v20l10-10z" fill="currentColor" /></svg></TransportButton>
          <TransportButton><svg width="10" height="4"><path d="M0 0h10v3H0z" fill="currentColor" /></svg></TransportButton>
          <TransportButton><svg width="20" height="20"><path d="M10 0v20M0 10h20" {...line} strokeWidth={2.500} /></svg></TransportButton>
          <RangeLimit>
            <span>Range Limit</span>
            <div>
              <ModeButton $on>Loop</ModeButton>
              <ModeButton>Once</ModeButton>
            </div>
          </RangeLimit>
        </Controls>
      </Transport>
    </Timeline>
  </DesignerWindow>
);

const Browser = () => (
  <BrowserWindow>
    <TabStrip>
      <Lights $gap={18}>
        {[0, 1, 2].map(i => <Light key={i} $size={28} $color="#56575b" />)}
      </Lights>
      <BrowserTab>
        <svg width="28" height="28" viewBox="0 0 28 28">
          <circle cx="14" cy="14" r="14" fill="#a3a9b6" />
          <path d="M14 3c-1 3-5 3-5 6s5 1 5 4 3 3 5 2l5 3q-2 5-8 7c-2-3 0-5-3-6-2-1-3-3-2-5-3-1-6-2-8-1 0-6 5-10 11-10z" fill="#393b41" />
          <circle cx="14" cy="14" r="12.500" fill="none" stroke="#a3a9b6" strokeWidth="3" />
        </svg>
        <span>TDPILOT_API</span>
        <svg width="18" height="18"><path d="M2 2l14 14M16 2L2 16" stroke="#e4e4e4" strokeWidth="2.600" /></svg>
      </BrowserTab>
      <svg width="82" height="22"><path d="M41 1v20M31 11h20" stroke="#cfcfcf" strokeWidth="2.600" /></svg>
      <TabMenu><svg width="18" height="12"><path d="M2 2l7 7 7-7" fill="none" stroke="#e8e8e8" strokeWidth="3" /></svg></TabMenu>
    </TabStrip>
    <NavBar>
      <NavIcon $mr={46} width="30" height="26"><path d="M29 13H5M15 2L4 13l11 11" {...line} strokeWidth={2.600} /></NavIcon>
      <NavIcon $mr={45} width="26" height="26"><path d="M0 13h23M12 2l11 11-11 11" {...line} strokeWidth={2.600} /></NavIcon>
      <NavIcon $mr={40} width="26" height="26"><path d="M23 17a10.500 10.500 0 1 1-1-10l2 2M24 1v8h-8" {...line} strokeWidth={2.600} /></NavIcon>
      <AddressBar>
        <SiteInfo><svg width="28" height="28"><circle cx="14" cy="14" r="11.700" fill="none" stroke="#e6e6e6" strokeWidth="2.600" /><path d="M14 12.500v7M14 8v2.600" stroke="#e6e6e6" strokeWidth="2.600" /></svg></SiteInfo>
        <span>127.0.0.1:9987</span>
        <svg width="32" height="30"><path d="M16 3l3.700 8.600 9.300.8-7 6.200 2 9.100-8-4.800-8 4.800 2-9.100-7-6.200 9.300-.8z" fill="none" stroke="#d6d6d6" strokeWidth="2.600" /></svg>
      </AddressBar>
      <MailExtension>
        <svg width="32" height="14"><path d="M0 0h32v12H0z" fill="#b5423d" /><path d="M5 1h22l-11 9zM7 12l3-4M25 12l-3-4" fill="#c9b9b9" stroke="#c9b9b9" /></svg>
        <MailCount>3704:</MailCount>
      </MailExtension>
      <NavIcon $mr={41} width="32" height="32">
        <path d="M10 0h12l10 10v12L22 32H10L0 22V10z" fill="#ad3228" />
        <path d="M11 19V10m3.500 7V6.500m3.500 10V6.500m3.500 11V9" stroke="#cfcacb" strokeWidth="2.800" strokeLinecap="round" />
        <path d="M9.700 14h13v6q-1 6-6 6t-7-7zM22 20l4-4" fill="#cfcacb" stroke="#cfcacb" strokeWidth="2" />
      </NavIcon>
      <NavIcon $mr={34} width="34" height="34"><path d="M2 8h9q0-6 4-6t4 6h9v8q5 0 5 4t-5 4v8H2v-8q6-1 6-5t-6-4z" {...line} strokeWidth={3} strokeLinejoin="round" /></NavIcon>
      <NavDivider />
      <Avatar />
      <NavIcon $mr={0} width="6" height="30"><circle cx="3" cy="4" r="2.900" fill="currentColor" /><circle cx="3" cy="15" r="2.900" fill="currentColor" /><circle cx="3" cy="26" r="2.900" fill="currentColor" /></NavIcon>
    </NavBar>
    <Page>
      <PageHeader>
        <svg width="40" height="8"><path d="M3 0h10l-3 8H0zM17 0h10l-3 8H14zM30 0h10l-3 8H27z" fill="#6849f8" /></svg>
        <Brand>TDPILOT_API</Brand>
        <Connection>[<b>CONNECTED</b>]</Connection>
      </PageHeader>
      <Hero>
        {logo.map((row, i) => <LogoLine key={i}>{row}</LogoLine>)}
        <Tagline>API · STANDALONE · DEEPSEEK V4</Tagline>
        <Dashes />
        <Hint>type a message and press <Key>enter</Key></Hint>
        <Hint><Key>shift</Key>+<Key>enter</Key> for newline</Hint>
      </Hero>
      <Composer>
        <Prompt>&gt;</Prompt>
        <Input>ask touchdesigner to do something…</Input>
        <Send>SEND</Send>
      </Composer>
    </Page>
  </BrowserWindow>
);

export default function App() {
  return (
    <>
      <Global />
      <Desktop>
        <Designer />
        <Browser />
      </Desktop>
    </>
  );
}
